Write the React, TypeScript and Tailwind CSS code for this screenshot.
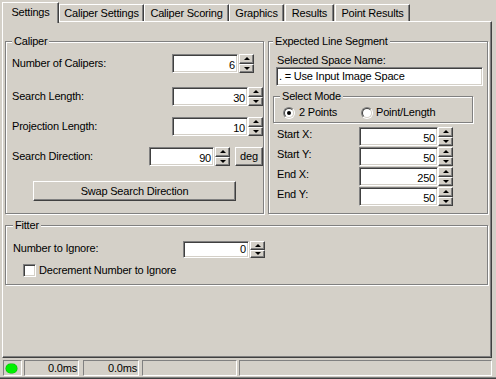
import type { ReactNode } from "react";

const raised =
  "border border-t-white border-l-white border-r-[#404040] border-b-[#404040] shadow-[inset_-1px_-1px_0_#808080]";
const sunken =
  "border border-t-[#808080] border-l-[#808080] border-r-white border-b-white shadow-[inset_1px_1px_0_#404040,inset_-1px_-1px_0_#d4d0c8]";
const thin = "border border-t-[#808080] border-l-[#808080] border-r-white border-b-white";

function Spin({ className = "h-[19px]" }: { className?: string }) {
  return (
    <div className={`flex w-[15px] flex-col ${className}`}>
      <div className={`${raised} flex flex-1 items-center justify-center bg-[#d4d0c8]`}>
        <span className="h-0 w-0 border-x-[3px] border-b-[3px] border-x-transparent border-b-black" />
      </div>
      <div className={`${raised} flex flex-1 items-center justify-center bg-[#d4d0c8]`}>
        <span className="h-0 w-0 border-x-[3px] border-t-[3px] border-x-transparent border-t-black" />
      </div>
    </div>
  );
}

function NumBox({ value, className }: { value: string; className: string }) {
  return (
    <div className={`${sunken} flex items-center justify-end bg-white pr-[2px] ${className}`}>
      {value}
    </div>
  );
}

function Group({
  label,
  labelLeft,
  className,
  children,
}: {
  label: string;
  labelLeft: string;
  className: string;
  children: ReactNode;
}) {
  return (
    <div
      className={`relative border border-[#808080] shadow-[inset_1px_1px_0_#fff,1px_1px_0_#fff] ${className}`}
    >
      <span className={`absolute top-[-7px] bg-[#d4d0c8] px-[2px] ${labelLeft}`}>{label}</span>
      {children}
    </div>
  );
}

function Radio({ checked }: { checked?: boolean }) {
  return (
    <span className="flex h-[12px] w-[12px] items-center justify-center rounded-full border border-t-[#808080] border-l-[#808080] border-r-white border-b-white">
      <span className="flex h-[10px] w-[10px] items-center justify-center rounded-full border border-t-[#404040] border-l-[#404040] border-r-[#d4d0c8] border-b-[#d4d0c8] bg-white">
        {checked && <span className="h-[4px] w-[4px] rounded-full bg-black" />}
      </span>
    </span>
  );
}

const tabs = [
  { label: "Caliper Settings", w: "w-[85px]" },
  { label: "Caliper Scoring", w: "w-[85px]" },
  { label: "Graphics", w: "w-[55px]" },
  { label: "Results", w: "w-[49px] ml-[1px]" },
  { label: "Point Results", w: "w-[75px] ml-[1px]" },
];

const points = [
  { label: "Start X:", value: "50" },
  { label: "Start Y:", value: "50" },
  { label: "End X:", value: "250" },
  { label: "End Y:", value: "50" },
];

export default function App() {
  return (
    <div className="h-[379px] w-[496px] overflow-hidden bg-[#d4d0c8] font-['Liberation_Sans',Arial,sans-serif] text-[11px] leading-[13px] tracking-[-0.2px] text-black select-none">
      {/* tab strip */}
      <div className="flex h-[21px] items-end pl-[2px]">
        <div className="relative z-10 -mb-[2px] h-[21px] w-[57px] border-t border-l border-r border-t-white border-l-white border-r-[#404040] bg-[#d4d0c8] pt-[3px] text-center shadow-[inset_-1px_0_0_#808080]">
          Settings
        </div>
        {tabs.map((t) => (
          <div
            key={t.label}
            className={`h-[17px] border-t border-l border-r border-t-white border-l-white border-r-[#404040] pt-[2px] text-center shadow-[inset_-1px_0_0_#808080] ${t.w}`}
          >
            {t.label}
          </div>
        ))}
      </div>

      {/* tab page */}
      <div className="ml-[2px] h-[337px] w-[490px] border border-t-white border-l-white border-r-[#404040] border-b-[#404040] pl-[2px] pt-[19px] shadow-[inset_-1px_-1px_0_#808080]">
        <div className="flex gap-[4px]">
          <Group label="Caliper" labelLeft="left-[6px]" className="h-[173px] w-[259px]">
            <div className="flex flex-col pl-[6px] pt-[12px]">
              <div className="flex h-[19px] items-center">
                <span className="w-[160px]">Number of Calipers:</span>
                <NumBox value="6" className="h-[19px] w-[66px] pt-[3px]" />
                <div className="ml-[1px]">
                  <Spin />
                </div>
              </div>
              <div className="mt-[14px] flex h-[19px] items-center">
                <span className="w-[160px]">Search Length:</span>
                <NumBox value="30" className="h-[19px] w-[76px] pt-[3px]" />
                <Spin />
              </div>
              <div className="mt-[11px] flex h-[19px] items-center">
                <span className="w-[160px]">Projection Length:</span>
                <NumBox value="10" className="h-[19px] w-[76px] pt-[3px]" />
                <Spin />
              </div>
              <div className="mt-[11px] flex h-[19px] items-center">
                <span className="w-[137px]">Search Direction:</span>
                <NumBox value="90" className="h-[19px] w-[65px] pt-[3px]" />
                <div className="ml-[1px]">
                  <Spin />
                </div>
                <button
                  className={`${raised} ml-[5px] flex h-[19px] w-[28px] items-center justify-center bg-[#d4d0c8]`}
                >
                  deg
                </button>
              </div>
              <button
                className={`${raised} ml-[21px] mt-[15px] flex h-[20px] w-[203px] items-center justify-center bg-[#d4d0c8]`}
              >
                Swap Search Direction
              </button>
            </div>
          </Group>

          <Group label="Expected Line Segment" labelLeft="left-[4px]" className="h-[173px] w-[220px]">
            <div className="flex flex-col pl-[4px] pt-[12px]">
              <span className="ml-[4px]">Selected Space Name:</span>
              <div className={`${sunken} ml-[3px] flex h-[19px] w-[207px] items-center bg-white pl-[2px]`}>
                . = Use Input Image Space
              </div>
              <Group label="Select Mode" labelLeft="left-[6px]" className="mt-[10px] h-[27px] w-[200px]">
                <div className="flex pl-[9px] pt-[9px]">
                  <label className="flex w-[78px] items-center gap-[4px]">
                    <Radio checked />
                    <span>2 Points</span>
                  </label>
                  <label className="flex items-center gap-[3px]">
                    <Radio />
                    <span>Point/Length</span>
                  </label>
                </div>
              </Group>
              <div className="mt-[4px] flex flex-col gap-[1px]">
                {points.map((p) => (
                  <div key={p.label} className="flex h-[19px] items-start">
                    <span className="ml-[4px] mt-[1px] w-[82px]">{p.label}</span>
                    <NumBox value={p.value} className="h-[19px] w-[79px] pt-[3px]" />
                    <Spin />
                  </div>
                ))}
              </div>
            </div>
          </Group>
        </div>

        <Group label="Fitter" labelLeft="left-[7px]" className="mt-[11px] h-[60px] w-[483px]">
          <div className="flex flex-col pl-[7px] pt-[15px]">
            <div className="flex h-[17px] items-start">
              <span className="mt-[1px] w-[170px]">Number to Ignore:</span>
              <NumBox value="0" className="h-[17px] w-[66px]" />
              <div className="ml-[1px]">
                <Spin className="h-[17px]" />
              </div>
            </div>
            <label className="mt-[6px] ml-[10px] flex items-center gap-[3px]">
              <span className={`${sunken} h-[13px] w-[13px] bg-white`} />
              <span>Decrement Number to Ignore</span>
            </label>
          </div>
        </Group>
      </div>

      {/* status bar */}
      <div className="mt-[2px] flex h-[16px] pl-[3px]">
        <div className={`${thin} flex w-[19px] items-center pl-[2px]`}>
          <span className="h-[9px] w-[11px] rounded-full bg-[#00f000] shadow-[0_0_0_0.5px_#00b000]" />
        </div>
        <div className={`${thin} ml-[2px] flex w-[55px] items-center justify-end pr-[1px]`}>0.0ms</div>
        <div className={`${thin} ml-[4px] flex w-[56px] items-center justify-end pr-[1px]`}>0.0ms</div>
        <div className={`${thin} ml-[3px] w-[95px]`} />
        <div className={`${thin} ml-[2px] w-[253px]`} />
      </div>
      <div className="mt-[1px] h-[2px] border-t border-b border-t-[#808080] border-b-[#404040]" />
    </div>
  );
}
